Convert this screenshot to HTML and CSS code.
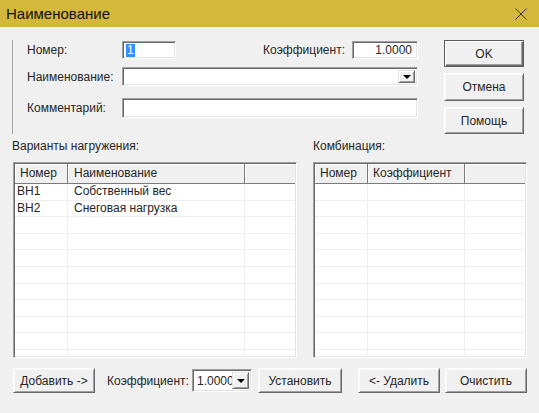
FILE: index.html
```html
<!DOCTYPE html>
<html lang="ru">
<head>
  <meta charset="UTF-8" />
  <title>Наименование</title>
  <link rel="stylesheet" href="styles.css">
</head>
<body>
  <div class="titlebar">
    <span class="title">Наименование</span>
    <svg class="close" width="12" height="12" viewBox="0 0 12 12">
      <path d="M0.5 0.5 L11.5 11.5 M11.5 0.5 L0.5 11.5" stroke="#333" stroke-width="1" fill="none" />
    </svg>
  </div>

  <div class="dialog">
    <div class="top">
      <div class="form">
        <div class="row row-1">
          <span class="label">Номер:</span>
          <div class="field num"><span class="sel">1</span></div>
          <span class="label coef-label">Коэффициент:</span>
          <div class="field coef">1.0000</div>
        </div>
        <div class="row row-2">
          <span class="label">Наименование:</span>
          <div class="field wide combo"><span class="combo-text"></span><span class="drop"><i class="arrow"></i></span></div>
        </div>
        <div class="row row-3">
          <span class="label">Комментарий:</span>
          <div class="field wide"></div>
        </div>
      </div>
      <div class="actions">
        <button class="btn default">OK</button>
        <button class="btn cancel">Отмена</button>
        <button class="btn">Помощь</button>
      </div>
    </div>

    <div class="lists">
      <div class="list">
        <div class="list-title">Варианты нагружения:</div>
        <div class="table table-left">
          <div class="thead">
            <div class="th c1">Номер</div>
            <div class="th c2">Наименование</div>
            <div class="th rest"></div>
          </div>
          <div class="tr"><div class="td c1">ВН1</div><div class="td c2">Собственный вес</div><div class="td rest"></div></div>
          <div class="tr"><div class="td c1">ВН2</div><div class="td c2">Снеговая нагрузка</div><div class="td rest"></div></div>
          <div class="tr"><div class="td c1"></div><div class="td c2"></div><div class="td rest"></div></div>
          <div class="tr"><div class="td c1"></div><div class="td c2"></div><div class="td rest"></div></div>
          <div class="tr"><div class="td c1"></div><div class="td c2"></div><div class="td rest"></div></div>
          <div class="tr"><div class="td c1"></div><div class="td c2"></div><div class="td rest"></div></div>
          <div class="tr"><div class="td c1"></div><div class="td c2"></div><div class="td rest"></div></div>
          <div class="tr"><div class="td c1"></div><div class="td c2"></div><div class="td rest"></div></div>
          <div class="tr"><div class="td c1"></div><div class="td c2"></div><div class="td rest"></div></div>
          <div class="tr"><div class="td c1"></div><div class="td c2"></div><div class="td rest"></div></div>
          <div class="tr"><div class="td c1"></div><div class="td c2"></div><div class="td rest"></div></div>
        </div>
      </div>
      <div class="list">
        <div class="list-title">Комбинация:</div>
        <div class="table table-right">
          <div class="thead">
            <div class="th c1">Номер</div>
            <div class="th c3">Коэффициент</div>
            <div class="th rest"></div>
          </div>
          <div class="tr"><div class="td c1"></div><div class="td c3"></div><div class="td rest"></div></div>
          <div class="tr"><div class="td c1"></div><div class="td c3"></div><div class="td rest"></div></div>
          <div class="tr"><div class="td c1"></div><div class="td c3"></div><div class="td rest"></div></div>
          <div class="tr"><div class="td c1"></div><div class="td c3"></div><div class="td rest"></div></div>
          <div class="tr"><div class="td c1"></div><div class="td c3"></div><div class="td rest"></div></div>
          <div class="tr"><div class="td c1"></div><div class="td c3"></div><div class="td rest"></div></div>
          <div class="tr"><div class="td c1"></div><div class="td c3"></div><div class="td rest"></div></div>
          <div class="tr"><div class="td c1"></div><div class="td c3"></div><div class="td rest"></div></div>
          <div class="tr"><div class="td c1"></div><div class="td c3"></div><div class="td rest"></div></div>
          <div class="tr"><div class="td c1"></div><div class="td c3"></div><div class="td rest"></div></div>
          <div class="tr"><div class="td c1"></div><div class="td c3"></div><div class="td rest"></div></div>
        </div>
      </div>
    </div>

    <div class="bottom">
      <button class="btn add">Добавить -&gt;</button>
      <span class="label bottom-label">Коэффициент:</span>
      <div class="field small-combo"><span class="combo-text">1.0000</span><span class="drop"><i class="arrow"></i></span></div>
      <button class="btn set">Установить</button>
      <button class="btn remove">&lt;- Удалить</button>
      <button class="btn clear">Очистить</button>
    </div>
  </div>
</body>
</html>
```

FILE: styles.css
```css
body {
  margin: 0;
  width: 539px;
  height: 413px;
  background: #f0f0f0;
  font-family: 'Liberation Sans', Arial, sans-serif;
  font-size: 12px;
  color: #262626;
  overflow: hidden;
}
.titlebar {
  height: 27px;
  background: #d4b83b;
  display: flex;
  align-items: center;
  padding: 0 12px 0 6px;
}
.title {
  font-size: 15px;
  color: #111;
  flex: 1;
}
.close {
  display: block;
}
.dialog {
  padding: 13px 12px 0 12px;
}
.top {
  display: flex;
}
.form {
  width: 406px;
  box-sizing: border-box;
  border-left: 1px solid #a8a8a8;
  padding: 0 0 4px 14px;
}
.row {
  display: flex;
  align-items: center;
}
.row-1 {
  margin-top: 1px;
  height: 18px;
}
.row-2 {
  margin-top: 8px;
  height: 19px;
}
.row-3 {
  margin-top: 12px;
  height: 20px;
}
.label {
  white-space: nowrap;
}
.row .label:first-child {
  width: 95px;
  flex: none;
}
.field {
  box-sizing: border-box;
  height: 100%;
  background: #fff;
  border: 1px solid;
  border-color: #a0a0a0 #fff #fff #a0a0a0;
  box-shadow: inset 1px 1px #696969, inset -1px -1px #e3e3e3;
  display: flex;
  align-items: center;
  padding: 0 3px;
}
.num {
  width: 54px;
}
.sel {
  background: #3390ff;
  color: #fff;
  padding: 0 1px;
  line-height: 13px;
}
.coef-label {
  margin-left: auto;
  margin-right: 7px;
}
.coef {
  width: 66px;
  justify-content: flex-end;
  padding-right: 5px;
}
.wide {
  flex: 1;
}
.combo {
  padding: 2px 2px 2px 3px;
}
.combo-text {
  flex: 1;
  min-width: 0;
  overflow: hidden;
  white-space: nowrap;
}
.drop {
  box-sizing: border-box;
  width: 17px;
  flex: none;
  height: 100%;
  background: #f0f0f0;
  border: 1px solid;
  border-color: #e3e3e3 #696969 #696969 #e3e3e3;
  box-shadow: inset 1px 1px #fff, inset -1px -1px #a0a0a0;
  display: flex;
  align-items: center;
  justify-content: center;
}
.arrow {
  width: 0;
  height: 0;
  border-left: 4px solid transparent;
  border-right: 4px solid transparent;
  border-top: 4px solid #000;
}
.actions {
  margin-left: 26px;
  width: 80px;
  display: flex;
  flex-direction: column;
  gap: 6px;
}
.btn {
  box-sizing: border-box;
  height: 27px;
  background: #f0f0f0;
  font-family: 'Liberation Sans', Arial, sans-serif;
  font-size: 12px;
  color: #262626;
  border: 1px solid;
  border-color: #fff #696969 #696969 #fff;
  box-shadow: inset 1px 1px #f7f7f7, inset -1px -1px #a0a0a0;
  padding: 0;
}
.btn.cancel {
  height: 28px;
}
.btn.default {
  border: 1px solid #5a5a5a;
  box-shadow: inset 1px 1px #fff, inset -1px -1px #696969, inset -2px -2px #a0a0a0;
}
.lists {
  display: grid;
  grid-template-columns: 285px 214px;
  column-gap: 16px;
}
.list-title {
  padding-top: 4px;
  line-height: 16px;
  margin-bottom: 8px;
}
.table {
  box-sizing: border-box;
  height: 196px;
  background: #fff;
  border: 1px solid;
  border-color: #a0a0a0 #fff #fff #a0a0a0;
  box-shadow: inset 1px 1px #696969, inset -1px -1px #e3e3e3;
  padding: 1px;
  overflow: hidden;
}
.table-left {
  margin-left: 1px;
}
.thead {
  display: flex;
  height: 20px;
  background: #f0f0f0;
  border-bottom: 1px solid #7a7a7a;
  box-sizing: border-box;
}
.th {
  box-sizing: border-box;
  height: 100%;
  padding-left: 5px;
  line-height: 19px;
  border-right: 1px solid #7a7a7a;
  box-shadow: inset 1px 1px #fff;
  white-space: nowrap;
}
.th.c2 {
  padding-left: 6px;
}
.th.rest {
  border-right: none;
}
.tr {
  display: flex;
  height: 16.6px;
  box-sizing: border-box;
  border-bottom: 1px solid #eeeeee;
}
.td {
  box-sizing: border-box;
  height: 100%;
  line-height: 15px;
  border-right: 1px solid #eeeeee;
  white-space: nowrap;
}
.td.c1 {
  padding-left: 2px;
}
.td.c2 {
  padding-left: 6px;
}
.td.rest {
  border-right: none;
}
.c1 {
  width: 53px;
  flex: none;
}
.c2 {
  width: 177px;
  flex: none;
}
.c3 {
  width: 97px;
  flex: none;
}
.rest {
  flex: 1;
}
.bottom {
  margin-top: 10px;
  display: flex;
  align-items: center;
  height: 25px;
}
.bottom .btn {
  height: 25px;
}
.add {
  margin-left: 1px;
  width: 82px;
}
.bottom-label {
  margin-left: 12px;
  width: 85px;
}
.small-combo {
  width: 60px;
  height: 23px;
  padding: 2px 2px 2px 4px;
}
.set {
  margin-left: 6px;
  width: 84px;
}
.remove {
  margin-left: 16px;
  width: 82px;
}
.clear {
  margin-left: 5px;
  width: 82px;
}
```
